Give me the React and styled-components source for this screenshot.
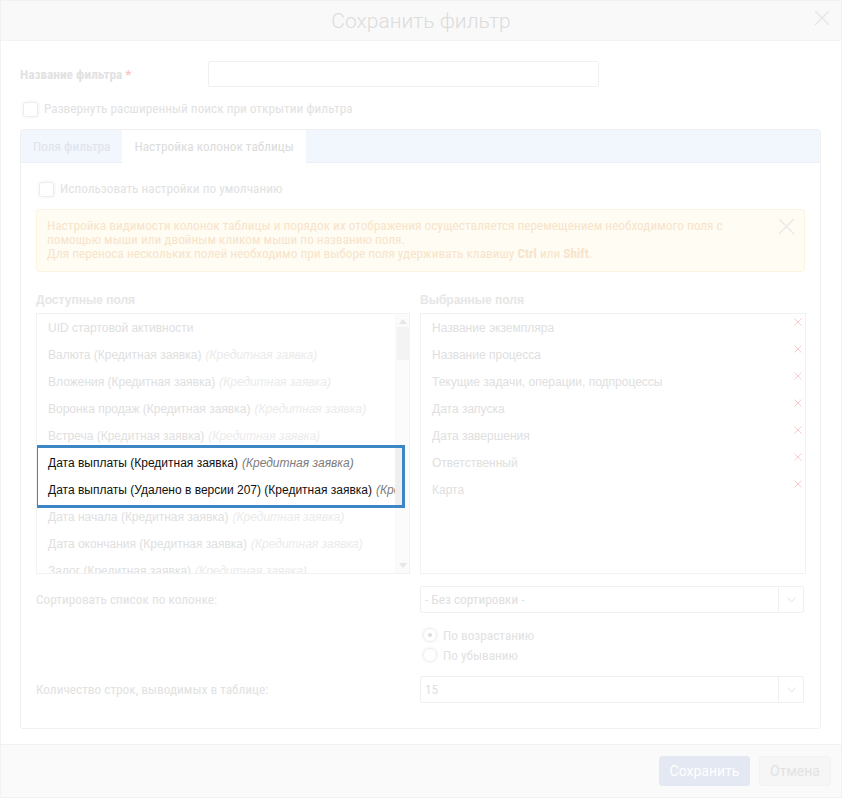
import React from "react";
import styled, { createGlobalStyle } from "styled-components";

const NARROW = `"Roboto Condensed", "DejaVu Sans Condensed", sans-serif`;
const SANS = `"Liberation Sans", Arial, sans-serif`;
const FS = "13.3px";

const Global = createGlobalStyle`
  html, body { margin: 0; padding: 0; background: #fff; }
  body { font-family: ${SANS}; }
  * { box-sizing: border-box; }
`;

const Dialog = styled.div`
  width: 842px;
  height: 798px;
  display: flex;
  flex-direction: column;
  border: 1px solid #f2f2f2;
  background: #fff;
  overflow: hidden;
`;

const Header = styled.div`
  position: relative;
  flex: none;
  height: 40px;
  display: flex;
  align-items: center;
  justify-content: center;
  background: #f9f9f9;
  border-bottom: 1px solid #f3f3f3;
`;

const Title = styled.h1`
  margin: 0;
  font: 300 21px Roboto, sans-serif;
  color: #dcdcdc;
`;

const IconButton = styled.span`
  position: absolute;
  top: ${(p) => p.$top}px;
  right: ${(p) => p.$right}px;
  display: block;
  line-height: 0;
`;

const Body = styled.div`
  flex: 1;
  padding: 20px 20px 0 19px;
`;

const NameRow = styled.div`
  display: flex;
  align-items: center;
  height: 26px;
`;

const FieldLabel = styled.label`
  width: 188px;
  font: bold ${FS} ${NARROW};
  color: #e2e2e2;
`;

const Required = styled.span`
  color: #f8c4c4;
`;

const TextInput = styled.div`
  width: 391px;
  height: 26px;
  border: 1px solid #f0f0f0;
  border-radius: 2px;
`;

const CheckRow = styled.div`
  display: flex;
  align-items: center;
  gap: 6px;
  height: 16px;
  margin-top: ${(p) => p.$mt}px;
  font: ${FS}/16px ${NARROW};
  color: #e2e2e2;
`;

const CheckBox = styled.span`
  width: 15px;
  height: 15px;
  margin-left: 3px;
  border: 1px solid #ececec;
  border-radius: 3px;
  background: #fff;
  box-shadow: 0 0 0 2px #fafafa;
`;

const TabsPanel = styled.div`
  margin-top: 12px;
  height: 600px;
  border: 1px solid #f0f0f0;
  border-radius: 3px;
  display: flex;
  flex-direction: column;
`;

const TabBar = styled.div`
  height: 33px;
  display: flex;
  background: #f2f6fd;
  border-bottom: 1px solid #ebf0f8;
`;

const Tab = styled.div`
  display: flex;
  align-items: center;
  padding: 0 12px;
  height: ${(p) => (p.$active ? "33px" : "32px")};
  background: ${(p) => (p.$active ? "#fff" : "transparent")};
  font: ${FS} ${NARROW};
  color: ${(p) => (p.$active ? "#dcdcdc" : "#dfe3ea")};
`;

const TabBody = styled.div`
  padding: 18px 15px 0 15px;
`;

const Alert = styled.div`
  position: relative;
  margin-top: 12px;
  height: 63px;
  padding: 9px 40px 0 10px;
  background: #fffcf3;
  border: 1px solid #fcf4e1;
  border-radius: 3px;
  font: ${FS}/14px ${NARROW};
  color: #f7e4cb;
  b { font-weight: bold; }
`;

const Columns = styled.div`
  display: grid;
  grid-template-columns: 374px 386px;
  column-gap: 10px;
  margin-top: 21px;
`;

const ColTitle = styled.div`
  height: 14px;
  margin-bottom: 6px;
  font: bold 12px/14px ${SANS};
  color: #e6e6e6;
`;

const ListBox = styled.div`
  position: relative;
  height: 261px;
  border: 1px solid #f2f2f2;
  display: flex;
  overflow: hidden;
`;

const Items = styled.div`
  flex: 1;
  min-width: 0;
  overflow: hidden;
`;

const Item = styled.div`
  position: relative;
  height: 27px;
  display: flex;
  align-items: center;
  padding-left: 11px;
  white-space: nowrap;
  overflow: hidden;
  font: 12px ${SANS};
  color: ${(p) => (p.$hl ? "#111" : "#e0e0e0")};
  background: #fff;
  i {
    margin-left: 4px;
    color: ${(p) => (p.$hl ? "#7d7d7d" : "#ebebeb")};
  }
`;

const RemoveMark = styled.span`
  position: absolute;
  right: 3px;
  top: 4px;
  line-height: 0;
`;

const ScrollTrack = styled.div`
  width: 14px;
  flex: none;
  display: flex;
  flex-direction: column;
  align-items: center;
  background: #fbfbfb;
  border-left: 1px solid #f8f8f8;
  padding: 5px 0 5px;
`;

const ScrollThumb = styled.div`
  width: 12px;
  height: 33px;
  margin-top: 3px;
  background: #f3f3f3;
`;

const Spacer = styled.div`
  flex: 1;
`;

const HighlightFrame = styled.div`
  position: absolute;
  left: -2px;
  top: 131px;
  width: 370px;
  height: 63px;
  border: 3px solid #3d86c6;
  pointer-events: none;
  &::after {
    content: "";
    position: absolute;
    top: 0;
    bottom: 0;
    right: 0;
    width: 7px;
    background: #efefef;
  }
`;

const FormGrid = styled.div`
  display: grid;
  grid-template-columns: 384px 384px;
  align-items: center;
  margin-top: ${(p) => p.$mt}px;
`;

const RowLabel = styled.div`
  font: ${FS} ${NARROW};
  color: #e2e2e2;
`;

const Select = styled.div`
  height: 27px;
  display: flex;
  border: 1px solid #f0f0f0;
  border-radius: 2px;
  font: ${FS} ${NARROW};
  color: #e0e0e0;
`;

const SelectValue = styled.div`
  flex: 1;
  display: flex;
  align-items: center;
  padding-left: 4px;
`;

const SelectArrow = styled.div`
  width: 25px;
  display: flex;
  align-items: center;
  justify-content: center;
  border-left: 1px solid #f0f0f0;
`;

const RadioGroup = styled.div`
  grid-column: 2;
  display: flex;
  flex-direction: column;
  margin-top: 12px;
`;

const RadioRow = styled.div`
  height: 20px;
  display: flex;
  align-items: center;
  gap: 6px;
  font: ${FS} ${NARROW};
  color: #e2e2e2;
`;

const RadioCircle = styled.span`
  position: relative;
  width: 14px;
  height: 14px;
  margin-left: 3px;
  border: 1px solid #ececec;
  border-radius: 50%;
  box-shadow: 0 0 0 2px #fafafa;
  &::after {
    content: "";
    display: ${(p) => (p.$checked ? "block" : "none")};
    position: absolute;
    left: 4px;
    top: 4px;
    width: 4px;
    height: 4px;
    border-radius: 50%;
    background: #dcdcdc;
  }
`;

const Footer = styled.div`
  flex: none;
  height: 53px;
  display: flex;
  align-items: center;
  justify-content: flex-end;
  gap: 9px;
  padding: 0 10px 1px 0;
  background: #fafafa;
  border-top: 1px solid #f2f2f2;
`;

const Button = styled.button`
  height: 30px;
  padding: 0;
  width: ${(p) => p.$w}px;
  border-radius: 3px;
  border: 1px solid ${(p) => (p.$primary ? "#e3e8f2" : "#f3f3f3")};
  background: ${(p) => (p.$primary ? "#e3e8f2" : "#f6f6f6")};
  color: ${(p) => (p.$primary ? "#fff" : "#e2e2e2")};
  font: 14px Roboto, sans-serif;
`;

const Cross = ({ size, color, width = 1.4 }) => (
  <svg width={size} height={size} viewBox="0 0 16 16">
    <path d="M1 1L15 15M15 1L1 15" stroke={color} strokeWidth={width} fill="none" />
  </svg>
);

const Chevron = () => (
  <svg width="9" height="6" viewBox="0 0 9 6">
    <path d="M0.5 0.5L4.5 5L8.5 0.5" stroke="#e2e2e2" strokeWidth="1" fill="none" />
  </svg>
);

const Tri = ({ down }) => (
  <svg width="8" height="5" viewBox="0 0 8 5">
    <path d={down ? "M0 0H8L4 5Z" : "M0 5H8L4 0Z"} fill="#e6e6e6" />
  </svg>
);

const available = [
  ["UID стартовой активности", null],
  ["Валюта (Кредитная заявка)", "(Кредитная заявка)"],
  ["Вложения (Кредитная заявка)", "(Кредитная заявка)"],
  ["Воронка продаж (Кредитная заявка)", "(Кредитная заявка)"],
  ["Встреча (Кредитная заявка)", "(Кредитная заявка)"],
  ["Дата выплаты (Кредитная заявка)", "(Кредитная заявка)", true],
  ["Дата выплаты (Удалено в версии 207) (Кредитная заявка)", "(Кредитная заявка)", true],
  ["Дата начала (Кредитная заявка)", "(Кредитная заявка)"],
  ["Дата окончания (Кредитная заявка)", "(Кредитная заявка)"],
  ["Залог (Кредитная заявка)", "(Кредитная заявка)"],
];

const selected = [
  "Название экземпляра",
  "Название процесса",
  "Текущие задачи, операции, подпроцессы",
  "Дата запуска",
  "Дата завершения",
  "Ответственный",
  "Карта",
];

export default function App() {
  return (
    <>
      <Global />
      <Dialog>
        <Header>
          <Title>Сохранить фильтр</Title>
          <IconButton $top={9} $right={11}>
            <Cross size={16} color="#e6e6e6" width={1.3} />
          </IconButton>
        </Header>
        <Body>
          <NameRow>
            <FieldLabel>
              Название фильтра <Required>*</Required>
            </FieldLabel>
            <TextInput />
          </NameRow>
          <CheckRow $mt={14}>
            <CheckBox />
            <span>Развернуть расширенный поиск при открытии фильтра</span>
          </CheckRow>
          <TabsPanel>
            <TabBar>
              <Tab>Поля фильтра</Tab>
              <Tab $active>Настройка колонок таблицы</Tab>
            </TabBar>
            <TabBody>
              <CheckRow $mt={0}>
                <CheckBox />
                <span>Использовать настройки по умолчанию</span>
              </CheckRow>
              <Alert>
                Настройка видимости колонок таблицы и порядок их отображения осуществляется перемещением необходимого поля с
                <br />
                помощью мыши или двойным кликом мыши по названию поля.
                <br />
                Для переноса нескольких полей необходимо при выборе поля удерживать клавишу <b>Ctrl</b> или <b>Shift</b>.
                <IconButton $top={8} $right={9}>
                  <Cross size={17} color="#e8e8e8" width={1.3} />
                </IconButton>
              </Alert>
              <Columns>
                <div>
                  <ColTitle>Доступные поля</ColTitle>
                  <ListBox>
                    <Items>
                      {available.map(([t, it, hl]) => (
                        <Item key={t} $hl={hl}>
                          {t}
                          {it && <i>{it}</i>}
                        </Item>
                      ))}
                    </Items>
                    <ScrollTrack>
                      <Tri />
                      <ScrollThumb />
                      <Spacer />
                      <Tri down />
                    </ScrollTrack>
                    <HighlightFrame />
                  </ListBox>
                </div>
                <div>
                  <ColTitle>Выбранные поля</ColTitle>
                  <ListBox>
                    <Items>
                      {selected.map((t) => (
                        <Item key={t}>
                          {t}
                          <RemoveMark>
                            <Cross size={8} color="#fccaca" width={2} />
                          </RemoveMark>
                        </Item>
                      ))}
                    </Items>
                  </ListBox>
                </div>
              </Columns>
              <FormGrid $mt={12}>
                <RowLabel>Сортировать список по колонке:</RowLabel>
                <Select>
                  <SelectValue>- Без сортировки -</SelectValue>
                  <SelectArrow>
                    <Chevron />
                  </SelectArrow>
                </Select>
                <RadioGroup>
                  <RadioRow>
                    <RadioCircle $checked />
                    <span>По возрастанию</span>
                  </RadioRow>
                  <RadioRow>
                    <RadioCircle />
                    <span>По убыванию</span>
                  </RadioRow>
                </RadioGroup>
              </FormGrid>
              <FormGrid $mt={11}>
                <RowLabel>Количество строк, выводимых в таблице:</RowLabel>
                <Select>
                  <SelectValue>15</SelectValue>
                  <SelectArrow>
                    <Chevron />
                  </SelectArrow>
                </Select>
              </FormGrid>
            </TabBody>
          </TabsPanel>
        </Body>
        <Footer>
          <Button $primary $w={91}>Сохранить</Button>
          <Button $w={72}>Отмена</Button>
        </Footer>
      </Dialog>
    </>
  );
}
